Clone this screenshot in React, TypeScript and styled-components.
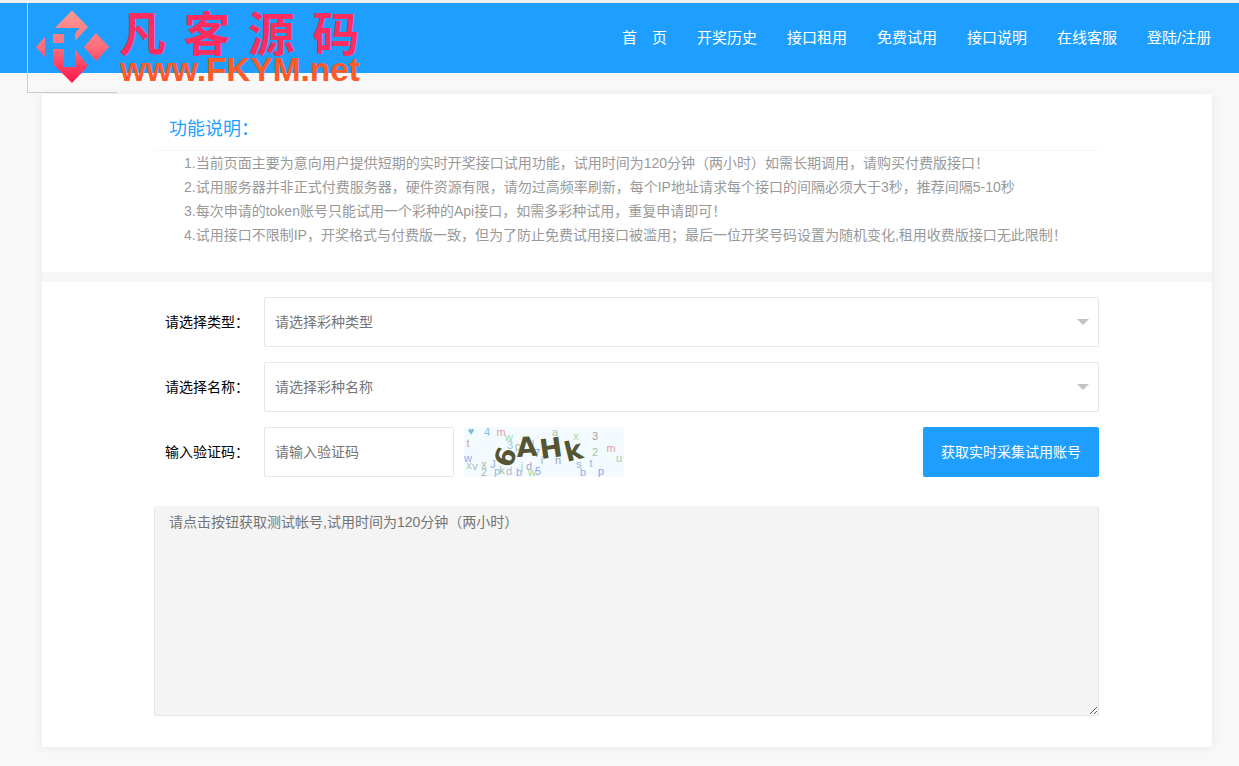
import React from "react";
import styled, { createGlobalStyle } from "styled-components";

const Global = createGlobalStyle`
    html, body {
        margin      : 0;
        padding     : 0;
        background  : #f8f8f8;
        font-family : "Liberation Sans", "Noto Sans CJK SC", sans-serif;
    }
    * { box-sizing : border-box; }
`;

const Page = styled.div`
    padding-top : 3px;
    position    : relative;
    min-height  : 766px;
`;

const TopEdge = styled.div`
    position   : absolute;
    top        : 0;
    left       : 0;
    right      : 0;
    height     : 3px;
    background : #eeeeee;
`;

const Header = styled.header`
    height          : 70px;
    background      : #1e9fff;
    display         : flex;
    justify-content : flex-end;
    align-items     : center;
    padding-right   : 27px;
`;

const Nav = styled.nav`
    display : flex;
    gap     : 30px;
`;

const NavLink = styled.a`
    color       : #fff;
    font-size   : 15px;
    line-height : 70px;
    white-space : pre;
`;

const NavLast = styled(NavLink)`
    width : 65px;
`;

const LogoFrame = styled.div`
    position      : absolute;
    top           : 3px;
    left          : 27px;
    width         : 90px;
    height        : 90px;
    border-left   : 1px solid #ccc;
    border-bottom : 1px solid #ccc;
`;

const LogoMark = styled.svg`
    position : absolute;
    top      : 7px;
    left     : 8px;
`;

const LogoName = styled.div`
    position       : absolute;
    top            : 5px;
    left           : 91px;
    color          : #ff2d5f;
    font-family    : "Noto Sans CJK SC", sans-serif;
    font-weight    : 700;
    font-size      : 47px;
    line-height    : 46px;
    letter-spacing : 17.5px;
    white-space    : nowrap;
`;

const LogoUrl = styled.div`
    position    : absolute;
    top         : 51px;
    left        : 92px;
    color       : #ff5a28;
    font-weight : 700;
    font-size   : 33.4px;
    line-height : 32px;
    white-space : nowrap;
`;

const Card = styled.main`
    margin     : 21px 27px 19px 42px;
    background : #fff;
    box-shadow : 0 0 10px rgba(0, 0, 0, .07);
`;

const Intro = styled.section`
    padding : 14px 113px 25px 112px;
`;

const IntroTitle = styled.h2`
    margin        : 0;
    padding-left  : 15px;
    height        : 43px;
    line-height   : 42px;
    font-size     : 18px;
    font-weight   : 400;
    color         : #1e9fff;
    border-bottom : 1px solid #f6f6f6;
`;

const NoteList = styled.ol`
    margin     : 0;
    padding    : 0 0 0 30px;
    list-style : none;
`;

const Note = styled.li`
    font-size   : 14px;
    line-height : 24px;
    color       : #999;
    white-space : nowrap;
`;

const Divider = styled.div`
    height     : 10px;
    background : #f6f6f6;
`;

const Form = styled.form`
    padding        : 15px 113px 31px 112px;
    display        : flex;
    flex-direction : column;
    gap            : 15px;
`;

const Row = styled.div`
    display     : flex;
    align-items : center;
    height      : 50px;
`;

const Label = styled.label`
    width       : 110px;
    padding     : 0 0 2px 11px;
    flex-shrink : 0;
    font-size   : 14px;
    color       : #000;
`;

const Select = styled.div`
    flex            : 1;
    height          : 50px;
    display         : flex;
    align-items     : center;
    justify-content : space-between;
    padding         : 0 9px 0 10px;
    background      : #fff;
    border          : 1px solid #e6e6e6;
    border-radius   : 2px;
    font-size       : 14px;
    color           : #757575;
`;

const SelectValue = styled.span`
    padding-bottom : 2px;
`;

const Caret = styled.span`
    width        : 0;
    height       : 0;
    border-style : solid;
    border-width : 6px 6px 0;
    border-color : #c2c2c2 transparent transparent;
`;

const CodeInput = styled.input`
    width         : 190px;
    height        : 50px;
    padding       : 0 10px;
    background    : #fff;
    border        : 1px solid #e6e6e6;
    border-radius : 2px;
    outline       : none;
    font-family   : inherit;
    font-size     : 14px;
    &::placeholder { color : #757575; opacity : 1; }
`;

const CaptchaImage = styled.svg`
    margin-left : 10px;
    background  : #f3fbfe;
    flex-shrink : 0;
    display     : block;
`;

const Submit = styled.button`
    margin-left   : auto;
    width         : 176px;
    height        : 50px;
    padding       : 0 0 2px;
    background    : #1e9fff;
    border        : 0;
    border-radius : 2px;
    color         : #fff;
    font-family   : inherit;
    font-size     : 14px;
`;

const Output = styled.textarea`
    display       : block;
    margin-top    : 14px;
    width         : 100%;
    height        : 210px;
    padding       : 6px 14px;
    background    : #f4f4f4;
    border        : 1px solid #e6e6e6;
    border-top    : 0;
    border-radius : 2px;
    outline       : none;
    color         : #757575;
    font-family   : inherit;
    font-size     : 14px;
    line-height   : 20px;
    resize        : vertical;
`;

const NAV = ["首\u3000页", "开奖历史", "接口租用", "免费试用", "接口说明", "在线客服"];

const NOTES = [
    "1.当前页面主要为意向用户提供短期的实时开奖接口试用功能，试用时间为120分钟（两小时）如需长期调用，请购买付费版接口！",
    "2.试用服务器并非正式付费服务器，硬件资源有限，请勿过高频率刷新，每个IP地址请求每个接口的间隔必须大于3秒，推荐间隔5-10秒",
    "3.每次申请的token账号只能试用一个彩种的Api接口，如需多彩种试用，重复申请即可！",
    "4.试用接口不限制IP，开奖格式与付费版一致，但为了防止免费试用接口被滥用；最后一位开奖号码设置为随机变化,租用收费版接口无此限制！",
];

// noise letters of the captcha: [char, centre x, centre y, colour]
const NOISE: [string, number, number, string][] = [
    ["♥", 7, 4, "#7fbcd8"], ["4", 23, 5, "#95bcdc"], ["m", 37, 5, "#e0a0a0"], ["w", 45, 10, "#a5d8a0"],
    ["a", 91, 5, "#a8c4a0"], ["x", 112, 9, "#a5dca0"], ["3", 131, 9, "#a5a5a5"], ["t", 4, 16, "#e0a098"],
    ["3", 46, 18, "#98c4e8"], ["p", 54, 19, "#a8c4a0"], ["l", 69, 17, "#98c0e8"], ["7", 73, 26, "#7fa8e0"],
    ["i", 78, 33, "#b0b0b0"], ["n", 94, 33, "#a0a0a8"], ["2", 131, 25, "#a0c4a0"], ["m", 147, 21, "#e0a0a0"],
    ["u", 155, 31, "#b0c0b0"], ["w", 4, 31, "#98a8e8"], ["x", 5, 38, "#b0c4b0"], ["v", 11, 39, "#a8b8c8"],
    ["x", 20, 37, "#b0c0a0"], ["J", 29, 37, "#98b0e0"], ["2", 20, 45, "#a8b8a8"], ["p", 33, 44, "#90c0e8"],
    ["k", 38, 43, "#a0c4a0"], ["d", 45, 44, "#a8b8c8"], ["b", 55, 45, "#98a8e8"], ["j", 58, 39, "#a0d8a0"],
    ["d", 65, 39, "#a8a8d0"], ["w", 68, 45, "#a0d8a0"], ["5", 74, 44, "#90a0e8"], ["s", 115, 37, "#90b0e8"],
    ["t", 127, 36, "#90b8e8"], ["b", 119, 45, "#90b0e0"], ["p", 137, 44, "#9898e8"],
];

const CODE: [string, number, number, number][] = [
    ["6", 47, 42, -70],
    ["A", 53, 30, -4],
    ["H", 77, 32, -8],
    ["k", 103, 35, -14],
];

const Captcha = () => (
    <CaptchaImage width="160" height="50" viewBox="0 0 160 50">
        {NOISE.map(([c, x, y, fill], i) => (
            <text key={i} x={x} y={y + 4} textAnchor="middle" fontSize="11" fontFamily="Liberation Sans" fill={fill}>{c}</text>
        ))}
        {CODE.map(([c, x, y, r]) => (
            <text
                key={c}
                transform={`translate(${x} ${y}) rotate(${r})`}
                fontSize="27"
                fontWeight="700"
                fontFamily="DejaVu Sans"
                fill="#555533"
            >
                {c}
            </text>
        ))}
    </CaptchaImage>
);

const Logo = () => (
    <LogoFrame>
        <LogoMark width="74" height="74" viewBox="36 10 74 74">
            <defs>
                <linearGradient id="logoFill" gradientUnits="userSpaceOnUse" x1="0" y1="10" x2="0" y2="83">
                    <stop offset="0" stopColor="#ff9a90" />
                    <stop offset=".5" stopColor="#ff6f7c" />
                    <stop offset="1" stopColor="#ff1448" />
                </linearGradient>
            </defs>
            <g fill="url(#logoFill)">
                <path d="M72 10.5 L88 27 L75 41 L75 33 L80 28 L55 28 Z" />
                <path d="M53 34 L64 34 L64 43 L53 43 Z" />
                <path d="M53 49 L64 49 L64 67 L75 67 L75 49 L88 66 L72 83 L53 64 Z" />
                <path d="M96 33 L109 47 L96 61 L84 47 Z" />
                <path d="M36 47 L45 37 L45 57 Z" />
            </g>
        </LogoMark>
        <LogoName>凡客源码</LogoName>
        <LogoUrl>www.FKYM.net</LogoUrl>
    </LogoFrame>
);

const App = () => (
    <Page>
        <Global />
        <TopEdge />
        <Header>
            <Nav>
                {NAV.map(n => <NavLink key={n}>{n}</NavLink>)}
                <NavLast>登陆/注册</NavLast>
            </Nav>
        </Header>
        <Logo />
        <Card>
            <Intro>
                <IntroTitle>功能说明：</IntroTitle>
                <NoteList>
                    {NOTES.map(n => <Note key={n}>{n}</Note>)}
                </NoteList>
            </Intro>
            <Divider />
            <Form>
                <Row>
                    <Label>请选择类型：</Label>
                    <Select><SelectValue>请选择彩种类型</SelectValue><Caret /></Select>
                </Row>
                <Row>
                    <Label>请选择名称：</Label>
                    <Select><SelectValue>请选择彩种名称</SelectValue><Caret /></Select>
                </Row>
                <Row>
                    <Label>输入验证码：</Label>
                    <CodeInput placeholder="请输入验证码" />
                    <Captcha />
                    <Submit type="button">获取实时采集试用账号</Submit>
                </Row>
                <Output readOnly value="请点击按钮获取测试帐号,试用时间为120分钟（两小时）" />
            </Form>
        </Card>
    </Page>
);

export default App;
